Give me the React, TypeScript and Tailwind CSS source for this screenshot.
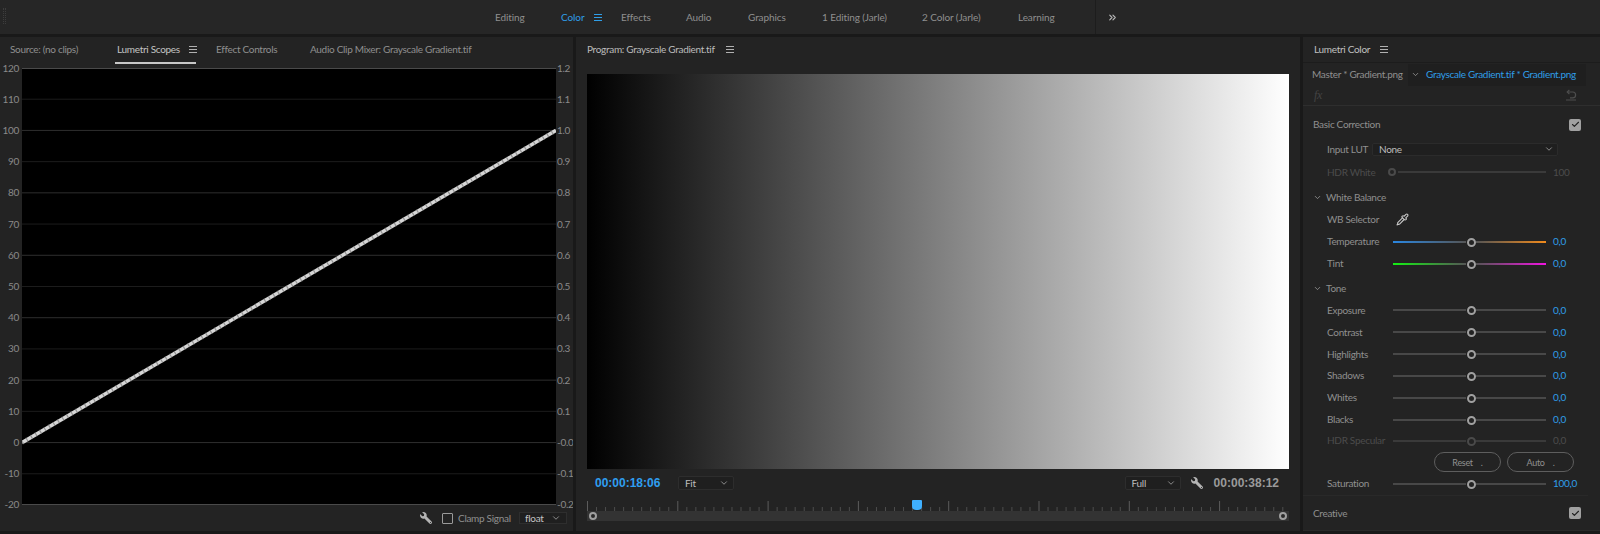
import React from "react";
import { ChevronDown, ChevronsRight, Check, Pipette } from "lucide-react";
import { FaWrench } from "react-icons/fa";

function MenuIcon({ color = "#b0b0b0" }: { color?: string }) {
  return (
    <svg width="8" height="7" viewBox="0 0 8 7" className="block shrink-0">
      <path d="M0 .5h8M0 3.5h8M0 6.5h8" stroke={color} strokeWidth="1" />
    </svg>
  );
}

function ResetIcon() {
  return (
    <svg width="12" height="12" viewBox="0 0 12 12" fill="none" className="block">
      <path d="M2.5 3h5.2a2.9 2.9 0 0 1 0 5.8H5" stroke="#4e4e4e" strokeWidth="1.2" />
      <path d="M4.4 .8 2.2 3l2.2 2.2" stroke="#4e4e4e" strokeWidth="1.2" />
      <path d="M1 11h10" stroke="#4e4e4e" strokeWidth="1" />
    </svg>
  );
}

function Wrench() {
  return <FaWrench size={12} color="#b4b4b4" className="-scale-x-100" />;
}

function NavItem({ w, children, active }: { w: number; children: React.ReactNode; active?: boolean }) {
  return (
    <div style={{ width: w }} className={active ? "text-[#2f9ee8]" : "text-[#8f8f8f]"}>
      {children}
    </div>
  );
}

function TopBar() {
  return (
    <div className="relative flex h-[34px] shrink-0 items-center bg-[#262626] pl-[495px] text-[10px] tracking-[-0.1px]">
      <div className="absolute left-[3px] top-[8px] h-[16px] w-[3px] border-x border-dotted border-[#3d3d3d]" />
      <NavItem w={66}>Editing</NavItem>
      <NavItem w={33} active>Color</NavItem>
      <div className="w-[27px]"><MenuIcon color="#2f9ee8" /></div>
      <NavItem w={65}>Effects</NavItem>
      <NavItem w={62}>Audio</NavItem>
      <NavItem w={74}>Graphics</NavItem>
      <NavItem w={100}>1 Editing (Jarle)</NavItem>
      <NavItem w={96}>2 Color (Jarle)</NavItem>
      <NavItem w={77}>Learning</NavItem>
      <div className="h-[34px] w-[12px] border-l border-[#1d1d1d]" />
      <ChevronsRight size={11} color="#b8b8b8" strokeWidth={2.5} />
    </div>
  );
}

const leftLabels = ["120", "110", "100", "90", "80", "70", "60", "50", "40", "30", "20", "10", "0", "-10", "-20"];
const rightLabels = ["1.2", "1.1", "1.0", "0.9", "0.8", "0.7", "0.6", "0.5", "0.4", "0.3", "0.2", "0.1", "-0.0", "-0.1", "-0.2"];

function Scope() {
  const W = 534;
  const H = 437;
  const step = H / 14;
  return (
    <div className="flex h-[437px]">
      <div className="flex w-[22px] flex-col justify-between">
        {leftLabels.map((l) => (
          <div key={l} className="flex h-0 items-center justify-end pr-[3px] text-[10px] text-[#8a8a8a]">{l}</div>
        ))}
      </div>
      <div className="h-[437px] w-[534px] bg-black">
        <svg width={W} height={H} viewBox={`0 0 ${W} ${H}`} className="block">
          {leftLabels.map((l, i) => (
            <line
              key={l}
              x1="0"
              x2={W}
              y1={i * step + (i === 14 ? -0.5 : i === 0 ? 0.5 : 0)}
              y2={i * step + (i === 14 ? -0.5 : i === 0 ? 0.5 : 0)}
              stroke={i === 0 || i === 14 ? "#4a4a4a" : i % 2 === 0 ? "#2e2e2e" : "#1c1c1c"}
              strokeWidth="1"
            />
          ))}
          <line x1="0" y1={step * 12} x2={W} y2={step * 2} stroke="#d6d6d6" strokeWidth="3.6" />
          <line x1="0" y1={step * 12} x2={W} y2={step * 2} stroke="#777777" strokeWidth="4.4" strokeDasharray="1.2 4" opacity="0.7" />
        </svg>
      </div>
      <div className="flex w-[17px] flex-col justify-between">
        {rightLabels.map((l) => (
          <div key={l} className="flex h-0 items-center whitespace-nowrap pl-[1px] text-[10px] text-[#8a8a8a]">{l}</div>
        ))}
      </div>
    </div>
  );
}

function LeftPanel() {
  return (
    <div className="flex w-[573px] shrink-0 flex-col overflow-hidden bg-[#232323]">
      <div className="flex h-[31px] items-start pl-[10px] pt-[5px] text-[10px] text-[#8f8f8f]">
        <div className="w-[105px] leading-[14px]">Source: (no clips)</div>
        <div className="flex h-[22px] w-[81px] items-start gap-[9px] border-b-2 border-[#c8c8c8] pl-[2px] text-[#c4c4c4]">
          <span className="w-[63px] whitespace-nowrap leading-[14px]">Lumetri Scopes</span>
          <span className="pt-[4px]"><MenuIcon /></span>
        </div>
        <div className="ml-[20px] w-[94px] leading-[14px]">Effect Controls</div>
        <div className="whitespace-nowrap leading-[14px]">Audio Clip Mixer: Grayscale Gradient.tif</div>
      </div>
      <Scope />
      <div className="flex h-[26px] items-center pl-[420px] text-[10px] text-[#8f8f8f]">
        <div className="w-[22px]"><Wrench /></div>
        <div className="h-[11px] w-[11px] rounded-[1px] border border-[#9a9a9a]" />
        <span className="ml-[5px] w-[61px] whitespace-nowrap">Clamp Signal</span>
        <div className="flex h-[12px] w-[48px] items-center justify-between border border-[#2e2e2e] bg-[#1f1f1f] px-[5px] text-[#c4c4c4]">
          <span>float</span>
          <ChevronDown size={10} color="#a0a0a0" />
        </div>
      </div>
    </div>
  );
}

function Drop({ label }: { label: string }) {
  return (
    <div className="flex h-[14px] w-[56px] items-center justify-between rounded-[2px] border border-[#2d2d2d] bg-[#1f1f1f] pl-[6px] pr-[4px] text-[10px] text-[#bdbdbd]">
      <span>{label}</span>
      <ChevronDown size={10} color="#a0a0a0" />
    </div>
  );
}

function Ruler() {
  const ticks: React.ReactNode[] = [];
  for (let i = 0; i <= 77; i++) {
    const x = 0.5 + i * 9.03;
    const major = i % 10 === 0;
    ticks.push(<line key={i} x1={x} x2={x} y1={major ? 0 : 6} y2="10" stroke={major ? "#5c5c5c" : "#4d4d4d"} />);
  }
  return (
    <svg width="702" height="10" viewBox="0 0 702 10" className="block">
      {ticks}
    </svg>
  );
}

function Thumb({ cls }: { cls: string }) {
  return <div className={`absolute top-[1px] h-[8px] w-[8px] rounded-full border-2 border-[#a0a0a0] bg-[#2a2a2a] ${cls}`} />;
}

function MiddlePanel() {
  return (
    <div className="flex w-[724px] shrink-0 flex-col bg-[#232323] pl-[11px]">
      <div className="flex h-[37px] items-start gap-[8px] pt-[5px] text-[10px] text-[#bcbcbc]">
        <span className="w-[131px] whitespace-nowrap leading-[14px]">Program: Grayscale Gradient.tif</span>
        <span className="pt-[4px]"><MenuIcon /></span>
      </div>
      <div className="h-[395px] w-[702px] bg-[linear-gradient(90deg,#000,#fff)]" />
      <div className="flex h-[28px] w-[702px] items-center pl-[8px] pr-[10px]">
        <span className="w-[83px] font-['Liberation_Sans',sans-serif] text-[12px] font-bold tracking-normal text-[#2f9ef0]">00:00:18:06</span>
        <Drop label="Fit" />
        <div className="flex-1" />
        <Drop label="Full" />
        <div className="ml-[10px] w-[23px]"><Wrench /></div>
        <span className="font-['Liberation_Sans',sans-serif] text-[12px] font-bold tracking-normal text-[#9a9a9a]">00:00:38:12</span>
      </div>
      <div className="relative mt-[4px] w-[702px]">
        <Ruler />
        <div className="absolute left-[325px] top-[-1px] h-[10px] w-[10px] rounded-b-[4px] rounded-t-[1px] bg-[#3fb0ff]" />
      </div>
      <div className="relative h-[10px] w-[702px] bg-[#333333]">
        <Thumb cls="left-[2px]" />
        <Thumb cls="left-[692px]" />
      </div>
    </div>
  );
}

function Slider({ left, right, dim }: { left?: string; right?: string; dim?: boolean }) {
  const gray = dim ? "bg-[#3a3a3a]" : "bg-[#484848]";
  return (
    <div className="relative flex h-[10px] w-[153px] items-center justify-between">
      <div className={`h-[2px] w-[73px] ${left ?? gray}`} />
      <div className={`h-[2px] w-[70px] ${right ?? gray}`} />
      <div
        className={`absolute left-[74px] top-[1px] h-[9px] w-[9px] rounded-full border-2 ${
          dim ? "border-[#4a4a4a]" : "border-[#a0a0a0]"
        } bg-[#232323]`}
      />
    </div>
  );
}

function SliderRow({ label, value = "0,0", left, right, dim, h = "h-[22px]" }: { label: string; value?: string; left?: string; right?: string; dim?: boolean; h?: string }) {
  return (
    <div className={`flex items-center pl-[24px] ${h}`}>
      <span className={`w-[66px] whitespace-nowrap ${dim ? "text-[#4c4c4c]" : "text-[#8f8f8f]"}`}>{label}</span>
      <Slider left={left} right={right} dim={dim} />
      <span className={`ml-[7px] ${dim ? "text-[#4c4c4c]" : "text-[#2f9ee8]"}`}>{value}</span>
    </div>
  );
}

function SectionHead({ label, h }: { label: string; h: string }) {
  return (
    <div className={`flex items-center pl-[10px] text-[#8f8f8f] ${h}`}>
      <ChevronDown size={9} color="#a0a0a0" className="mr-[4px]" />
      <span>{label}</span>
    </div>
  );
}

function Box() {
  return (
    <div className="flex h-[12px] w-[12px] items-center justify-center rounded-[2px] bg-[#a0a0a0]">
      <Check size={9} color="#202020" strokeWidth={3} />
    </div>
  );
}

function Pill({ label }: { label: string }) {
  return (
    <div className="flex h-[20px] w-[67px] items-center justify-center gap-[8px] rounded-full border border-[#5e5e5e] text-[9px] text-[#8f8f8f]">
      <span>{label}</span>
      <span>.</span>
    </div>
  );
}

function RightPanel() {
  return (
    <div className="flex w-[297px] shrink-0 flex-col bg-[#232323] text-[10px]">
      <div className="flex h-[26px] items-center gap-[10px] border-b border-[#1c1c1c] pl-[11px] text-[#c0c0c0]">
        <span className="w-[56px] whitespace-nowrap">Lumetri Color</span>
        <MenuIcon />
      </div>
      <div className="flex h-[23px] items-end pl-[9px] text-[#8f8f8f]">
        <span className="flex h-[22px] w-[96px] shrink-0 items-center whitespace-nowrap">Master * Gradient.png</span>
        <div className="flex h-[22px] w-[178px] shrink-0 items-center bg-[#1f1f1f] pl-[3px]">
          <ChevronDown size={9} color="#a0a0a0" className="shrink-0" />
          <span className="ml-[6px] whitespace-nowrap text-[#2f9ee8]">Grayscale Gradient.tif * Gradient.png</span>
        </div>
      </div>
      <div className="flex h-[20px] items-center justify-between border-b border-[#2e2e2e] pl-[11px] pr-[23px] font-['Liberation_Serif',serif] text-[12px] italic text-[#444444]">
        <span>fx</span>
        <ResetIcon />
      </div>
      <div className="flex h-[34px] items-center justify-between pl-[10px] pr-[19px] pt-[4px] text-[#8f8f8f]">
        <span>Basic Correction</span>
        <Box />
      </div>
      <div className="flex h-[20px] items-center pl-[24px]">
        <span className="w-[45px] whitespace-nowrap text-[#8f8f8f]">Input LUT</span>
        <div className="flex h-[13px] w-[186px] items-center justify-between rounded-[2px] border border-[#2b2b2b] bg-[#1f1f1f] pl-[6px] pr-[3px] text-[#bdbdbd]">
          <span>None</span>
          <ChevronDown size={10} color="#a0a0a0" />
        </div>
      </div>
      <div className="h-[2px]" />
      <div className="flex h-[22px] items-center pl-[24px]">
        <span className="w-[65px] whitespace-nowrap text-[#4c4c4c]">HDR White</span>
        <div className="relative flex h-[10px] w-[154px] items-center justify-end">
          <div className="h-[2px] w-[148px] bg-[#3a3a3a]" />
          <div className="absolute left-[-4px] top-[1px] h-[8px] w-[8px] rounded-full border-2 border-[#4a4a4a]" />
        </div>
        <span className="ml-[7px] text-[#4c4c4c]">100</span>
      </div>
      <div className="h-[4px]" />
      <SectionHead label="White Balance" h="h-[21px]" />
      <div className="flex h-[23px] items-center pl-[24px] text-[#8f8f8f]">
        <span className="w-[69px] whitespace-nowrap">WB Selector</span>
        <Pipette size={13} color="#c8c8c8" />
      </div>
      <SliderRow
        label="Temperature"
        left="bg-[linear-gradient(90deg,#2a86e0,#555555)]"
        right="bg-[linear-gradient(90deg,#555555,#f08a1c)]"
      />
      <SliderRow
        label="Tint"
        left="bg-[linear-gradient(90deg,#14f014,#555555)]"
        right="bg-[linear-gradient(90deg,#555555,#f014e0)]"
      />
      <div className="h-[3px]" />
      <SectionHead label="Tone" h="h-[22px]" />
      <SliderRow label="Exposure" />
      <SliderRow label="Contrast" />
      <SliderRow label="Highlights" />
      <SliderRow label="Shadows" />
      <SliderRow label="Whites" />
      <SliderRow label="Blacks" />
      <SliderRow label="HDR Specular" dim h="h-[21px]" />
      <div className="flex h-[22px] items-center gap-[6px] pl-[131px]">
        <Pill label="Reset" />
        <Pill label="Auto" />
      </div>
      <SliderRow label="Saturation" value="100,0" h="h-[21px]" />
      <div className="h-[1px]" />
      <div className="mr-[12px] border-t border-[#292929]" />
      <div className="flex h-[35px] items-center justify-between border-b border-[#292929] pl-[10px] pr-[19px] text-[#8f8f8f]">
        <span>Creative</span>
        <Box />
      </div>
    </div>
  );
}

export default function App() {
  return (
    <div className="flex h-[534px] w-[1600px] flex-col overflow-hidden bg-[#191919] font-['Lato',sans-serif] tracking-[-0.3px]">
      <TopBar />
      <div className="mt-[3px] flex h-[494px] gap-[3px]">
        <LeftPanel />
        <MiddlePanel />
        <RightPanel />
      </div>
    </div>
  );
}
